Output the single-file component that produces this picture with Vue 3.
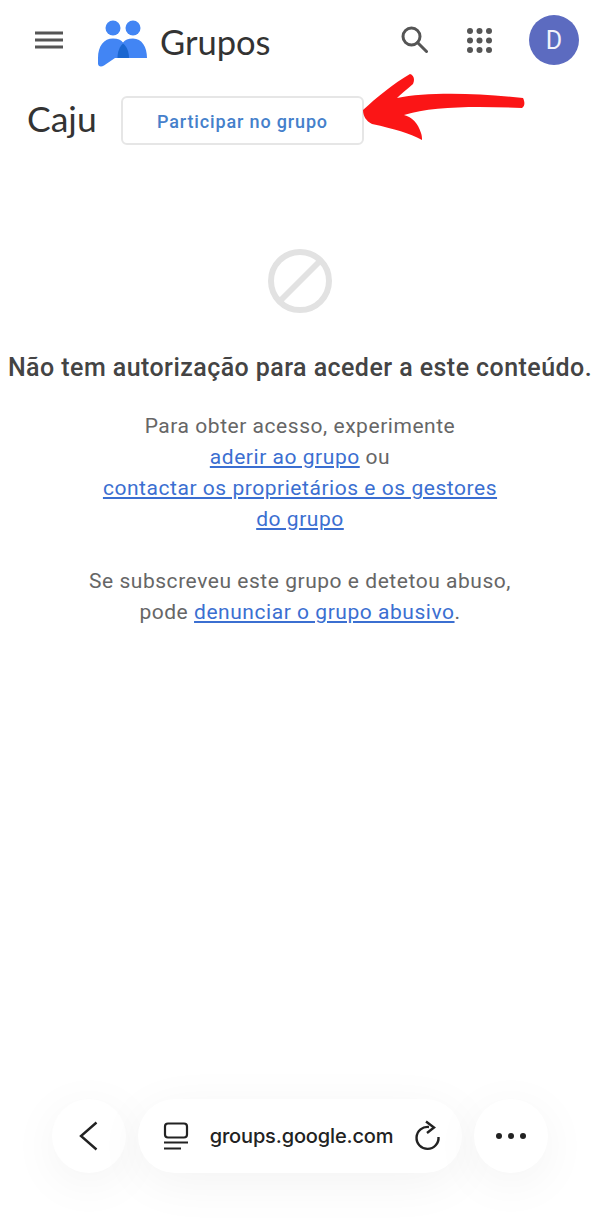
<template>
  <div class="page">
    <header class="topbar">
      <button class="icon-btn menu" aria-label="Menu">
        <svg width="28" height="18" viewBox="0 0 28 18"><path d="M0 2h28M0 9h28M0 16h28" stroke="#555" stroke-width="3" fill="none" /></svg>
      </button>
      <div class="logo">
        <svg width="50" height="47" viewBox="0 0 50 47">
          <circle cx="15" cy="8" r="7.500" fill="#4285f4" />
          <circle cx="35" cy="8" r="7.500" fill="#4285f4" />
          <path d="M0 38C0 26 6 18.500 15 18.500C20 18.500 23 20 25 22.500C27 20 30 18.500 35 18.500C44 18.500 49 27 49 38H17L6 45.500C3 47.500 0 46.500 0 43.500Z" fill="#4285f4" />
          <path d="M25 23.500C29 26.500 31 32 31 38H19.500C19.500 32 21.500 26.500 25 23.500Z" fill="#1a66d0" />
        </svg>
        <span class="logo-text">Grupos</span>
      </div>
      <div class="actions">
        <svg class="search" width="27" height="27" viewBox="0 0 27 27" fill="none" stroke="#555" stroke-width="3">
          <circle cx="10.500" cy="10.500" r="8.500" />
          <path d="M16.500 16.500L25.500 25.500" stroke-linecap="round" />
        </svg>
        <svg class="apps" width="25" height="25" viewBox="0 0 25 25" fill="#555">
          <template v-for="y in [3, 12.500, 22]" :key="y">
            <circle v-for="x in [3, 12.500, 22]" :key="x" :cx="x" :cy="y" r="3" />
          </template>
        </svg>
        <div class="avatar">D</div>
      </div>
    </header>

    <div class="group-row">
      <h1 class="group-name">Caju</h1>
      <button class="join-btn">Participar no grupo</button>
      <svg class="arrow" width="164" height="68" viewBox="0 0 164 68">
        <path d="M1 37C14 25 32 10 48 1C52 2 53 7 51 11C44 17 39 21 35 25C65 19 115 20 161 25C163 29 163 33 160 35C115 33 70 33 42 42C50 44 56 50 59 60C60 63 60 65 60 67C47 60 33 56 10 51C4 48 1 43 1 37Z" fill="#fb1516" />
      </svg>
    </div>

    <main class="notice">
      <svg class="denied" width="64" height="64" viewBox="0 0 64 64" fill="none" stroke="#e2e2e2" stroke-width="6">
        <circle cx="32" cy="32" r="29" />
        <path d="M12 52L52 12" />
      </svg>
      <h2 class="notice-title">Não tem autorização para aceder a este conteúdo.</h2>
      <p class="notice-text">
        Para obter acesso, experimente<br />
        <a href="#">aderir ao grupo</a> ou<br />
        <a href="#">contactar os proprietários e os gestores<br />do grupo</a>
      </p>
      <p class="notice-text">
        Se subscreveu este grupo e detetou abuso,<br />
        pode <a href="#">denunciar o grupo abusivo</a>.
      </p>
    </main>

    <nav class="browser-bar">
      <button class="round-btn" aria-label="Voltar">
        <svg width="20" height="30" viewBox="0 0 20 30" fill="none" stroke="#222" stroke-width="2.400"><path d="M17.500 1.500L2 15L17.500 28.500" /></svg>
      </button>
      <div class="url-pill">
        <svg width="26" height="28" viewBox="0 0 26 28" fill="none" stroke="#222" stroke-width="2.200">
          <rect x="2" y="1.500" width="22" height="14" rx="3" />
          <path d="M1 20.500H25M1 26.500H18" />
        </svg>
        <span class="url">groups.google.com</span>
        <svg width="28" height="32" viewBox="0 0 28 32" fill="none" stroke="#222" stroke-width="2.400">
          <path d="M15 7A11 11 0 1 0 24.500 17" />
          <path d="M12 1.500L20 7.500L13 13" />
        </svg>
      </div>
      <button class="round-btn" aria-label="Mais">
        <svg width="32" height="8" viewBox="0 0 32 8" fill="#222">
          <circle cx="4" cy="4" r="3" />
          <circle cx="16" cy="4" r="3" />
          <circle cx="28" cy="4" r="3" />
        </svg>
      </button>
    </nav>
  </div>
</template>

<script setup>
</script>

<style>
body {
  background: #fff;
}
</style>

<style scoped>
.page {
  width: 600px;
  height: 1222px;
  display: flex;
  flex-direction: column;
  overflow: hidden;
  font-family: Roboto, "Liberation Sans", sans-serif;
  background: #fff;
}

.topbar {
  display: flex;
  align-items: center;
  height: 80px;
  padding: 0 21px 0 35px;
  box-sizing: border-box;
}

.icon-btn {
  display: flex;
  padding: 0;
  border: 0;
  background: none;
}

.menu {
  margin-top: -1px;
}

.logo {
  display: flex;
  align-items: center;
  gap: 12px;
  margin-left: 35px;
  margin-top: 7px;
}

.logo-text {
  margin-top: -5px;
  font-family: Lato, sans-serif;
  font-size: 34.5px;
  color: #333;
}

.actions {
  display: flex;
  align-items: center;
  margin-left: auto;
}

.search {
  margin-top: -1px;
}

.apps {
  margin-left: 39px;
}

.avatar {
  display: flex;
  align-items: center;
  justify-content: center;
  width: 50px;
  height: 50px;
  margin-left: 37px;
  border-radius: 50%;
  background: #5c6bc0;
  color: #f2f2fa;
  font-size: 25px;
}

.group-row {
  position: relative;
  display: flex;
  align-items: center;
  height: 50px;
  margin-top: 16px;
  padding-left: 27px;
}

.group-name {
  width: 94px;
  margin: -5px 0 0;
  font-family: Lato, sans-serif;
  font-size: 35.500px;
  font-weight: 400;
  color: #333;
}

.join-btn {
  width: 243px;
  height: 49px;
  margin-top: -2px;
  padding: 3px 0 0;
  border: 2px solid #e6e6e6;
  border-radius: 6px;
  background: #fff;
  color: #4580cb;
  font-family: Roboto, sans-serif;
  font-size: 18px;
  font-weight: 500;
  letter-spacing: 0.85px;
}

.arrow {
  position: absolute;
  left: 362px;
  top: -23px;
}

.notice {
  display: flex;
  flex-direction: column;
  align-items: center;
  padding-top: 103px;
  text-align: center;
}

.notice-title {
  margin: 41px 0 0;
  font-size: 25px;
  line-height: 28px;
  font-weight: 500;
  letter-spacing: 0.44px;
  white-space: nowrap;
  color: #444;
}

.notice-text {
  margin: 0;
  font-size: 21px;
  line-height: 31px;
  letter-spacing: 0.54px;
  color: #666;
}

.notice-title + .notice-text {
  margin-top: 29px;
}

.notice-text + .notice-text {
  margin-top: 31px;
}

.notice-text a {
  color: #3b6fd1;
}

.browser-bar {
  display: flex;
  justify-content: center;
  gap: 12px;
  margin-top: auto;
  margin-bottom: 49px;
}

.round-btn,
.url-pill {
  display: flex;
  align-items: center;
  height: 74px;
  border: 0;
  background: #fff;
  box-shadow: 0 10px 50px rgba(0, 0, 0, 0.05);
}

.round-btn {
  justify-content: center;
  width: 74px;
  padding: 0;
  border-radius: 50%;
}

.url-pill {
  width: 324px;
  padding: 0 20px 0 25px;
  box-sizing: border-box;
  justify-content: space-between;
  border-radius: 37px;
}

.url {
  font-family: Inter, sans-serif;
  font-size: 20px;
  font-weight: 500;
  letter-spacing: -0.15px;
  color: #222;
}
</style>
